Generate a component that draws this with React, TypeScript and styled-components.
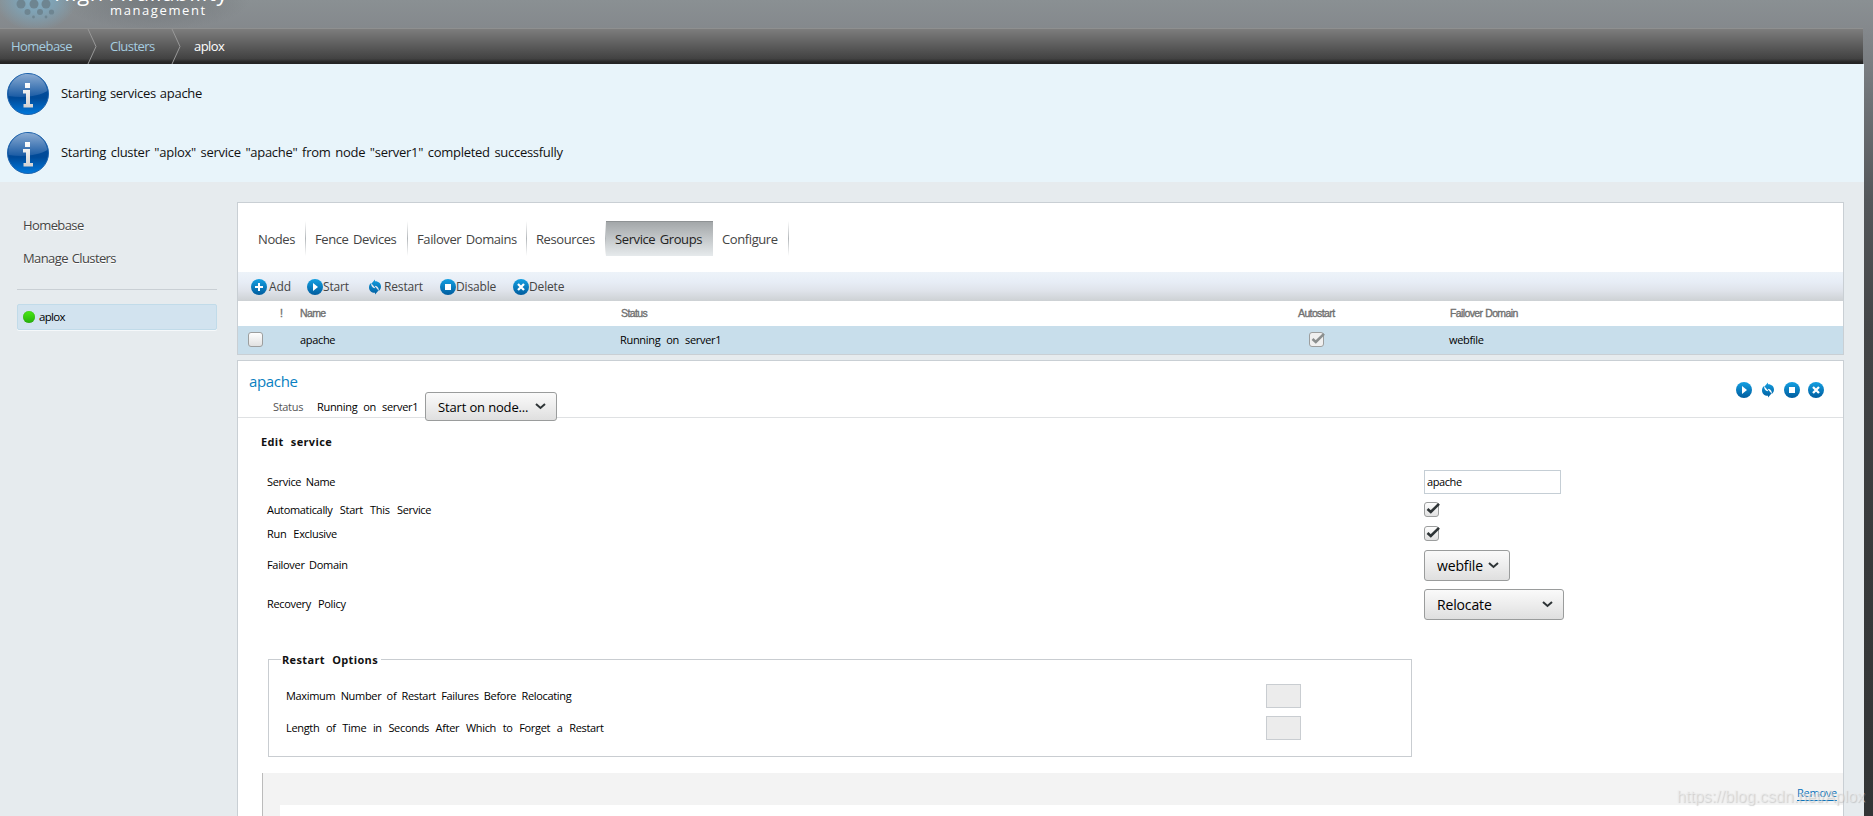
import React from 'react';
import styled, { createGlobalStyle } from 'styled-components';

const sans = `'Open Sans', 'Noto Sans', sans-serif`;

const GlobalStyle = createGlobalStyle`
  * { box-sizing: border-box; }
  body { margin: 0; overflow: hidden; font-family: ${sans}; color: #111; }
`;

const Page = styled.div`
  position: relative;
  width: 100%;
  height: 816px;
  overflow: hidden;
  display: flex;
  flex-direction: column;
  padding-right: 9px;
  background: linear-gradient(#8a9093 0, #84888c 30px, #6e7276 100px, #54575a 200px, #434547 330px, #383a3b 560px, #333536 816px);
`;

const Header = styled.header`
  height: 28px;
  flex: none;
  position: relative;
  overflow: hidden;
`;
const Glow = styled.div`
  position: absolute;
  left: -5px;
  top: -35px;
  width: 82px;
  height: 66px;
  background: radial-gradient(closest-side, #86b0c6 0, #7fa1b3 45%, rgba(130, 150, 160, 0) 100%);
`;
const Logo = styled.svg`
  position: absolute;
  left: 0;
  top: 0;
`;
const Shade = styled.div`
  position: absolute;
  left: 60px;
  top: -30px;
  width: 190px;
  height: 60px;
  background: radial-gradient(closest-side, rgba(90, 94, 98, 0.45), rgba(90, 94, 98, 0));
`;
const Brand = styled.div`
  position: absolute;
  left: 54px;
  top: -24px;
  font-weight: 500;
  font-size: 22px;
  line-height: 32px;
  letter-spacing: 0.7px;
  color: #fff;
  white-space: nowrap;
`;
const BrandSub = styled.div`
  position: absolute;
  left: 110px;
  top: 0;
  font-size: 13px;
  line-height: 20px;
  letter-spacing: 1.6px;
  color: #fff;
`;

const Breadcrumb = styled.nav`
  height: 36px;
  flex: none;
  margin-right: 1px;
  padding-left: 11px;
  display: flex;
  align-items: center;
  border-top: 1px solid #8f9090;
  background: linear-gradient(#7d7d7d, #5a5a5a 50%, #424242 85%, #272727 94%, #222);
`;
const Crumb = styled.a<{ $width: number; $current?: boolean }>`
  width: ${(p) => p.$width}px;
  font-size: 13px;
  letter-spacing: -0.55px;
  line-height: 35px;
  color: ${(p) => (p.$current ? '#fff' : '#a6cde0')};
`;
const Chevron = styled.svg`
  width: 10px;
  height: 35px;
  margin-right: 13px;
`;

const Messages = styled.section`
  flex: none;
  background: #e8f4fa;
`;
const Message = styled.div`
  height: 59px;
  display: flex;
  align-items: center;
  padding-left: 7px;
  gap: 12px;
  font-size: 13px;
  line-height: 20px;
`;
const MessageText = styled.span<{ $word: number }>`
  padding-bottom: 2px;
  letter-spacing: -0.28px;
  word-spacing: ${(p) => p.$word}px;
`;

const Body = styled.div`
  flex: 1;
  min-height: 0;
  display: flex;
  background: #e6ebee;
`;
const Sidebar = styled.aside`
  width: 237px;
  flex: none;
  padding: 27px 20px 0 17px;
`;
const SideLink = styled.a`
  display: block;
  padding-left: 6px;
  line-height: 33px;
  font-size: 13px;
  letter-spacing: -0.6px;
  word-spacing: 1px;
  color: #444;
  text-shadow: 0 1px 0 #fff;
`;
const SideRule = styled.div`
  margin: 14px 0;
  height: 1px;
  background: #c9cfd4;
`;
const SideItem = styled.a`
  height: 26px;
  display: flex;
  align-items: center;
  gap: 4px;
  padding-left: 5px;
  border: 1px solid #c1dbe9;
  border-radius: 2px;
  background: #d2e3ef;
  box-shadow: 0 1px 0 #f5f8fa;
  font-size: 11.5px;
  letter-spacing: -0.7px;
  color: #000;
`;
const SideItemLabel = styled.span`
  padding-bottom: 2px;
`;
const Dot = styled.i`
  width: 12px;
  height: 12px;
  border-radius: 50%;
  background: linear-gradient(#48ea14, #27b00c);
  box-shadow: inset 0 0 1px #2a9a10;
`;

const Main = styled.main`
  flex: 1;
  min-width: 0;
  padding: 20px 20px 0 0;
  display: flex;
  flex-direction: column;
  gap: 5px;
`;
const Panel = styled.section<{ $height: number }>`
  height: ${(p) => p.$height}px;
  flex: none;
  background: #fff;
  border: 1px solid #c9cfd4;
`;
const Tabs = styled.div`
  height: 69px;
  padding: 18px 0 0 11px;
  display: flex;
`;
const Tab = styled.a<{ $width: number; $active?: boolean }>`
  width: ${(p) => p.$width}px;
  height: 35px;
  padding-left: 9px;
  font-size: 13px;
  line-height: 34px;
  letter-spacing: -0.4px;
  word-spacing: 1.5px;
  white-space: nowrap;
  color: ${(p) => (p.$active ? '#222' : '#444')};
  background: ${(p) => (p.$active ? 'linear-gradient(#a3a7a9, #e6eaec)' : 'none')};
  border-top: ${(p) => (p.$active ? '1px solid #8e9294' : '1px solid transparent')};
`;
const TabRule = styled.i`
  width: 1px;
  height: 35px;
  background: linear-gradient(#fff, #b4b8bb 50%, #fff);
`;

const Toolbar = styled.div`
  height: 29px;
  padding-left: 13px;
  display: flex;
  align-items: center;
  background: linear-gradient(#edf3f9, #e7edf6 35%, #dfe3ea 65%, #cdd1d4);
`;
const Tool = styled.button<{ $width: number; $gap?: number }>`
  width: ${(p) => p.$width}px;
  padding: 0;
  border: 0;
  background: none;
  display: flex;
  align-items: center;
  gap: ${(p) => p.$gap ?? 0}px;
  font: 12px ${sans};
  line-height: 29px;
  letter-spacing: -0.15px;
  color: #444;
`;

const TableRow = styled.div<{ $selected?: boolean }>`
  height: ${(p) => (p.$selected ? 28 : 25)}px;
  display: grid;
  grid-template-columns: 38px 24px 320px 678px 38px 113px 1fr;
  align-items: center;
  background: ${(p) => (p.$selected ? '#c8deeb' : '#fff')};
`;
const Th = styled.span<{ $indent?: number }>`
  padding: 0 0 1px ${(p) => p.$indent ?? 0}px;
  font: 10.5px 'Liberation Sans', Arial, sans-serif;
  -webkit-text-stroke: 0.35px #707070;
  letter-spacing: -0.62px;
  word-spacing: 0.5px;
  white-space: nowrap;
  color: #707070;
`;
const CheckCell = styled.span<{ $start?: boolean }>`
  padding: 0 0 2px ${(p) => (p.$start ? 10 : 11)}px;
  line-height: 0;
`;

/* Compact 11px copy used by table cells and form labels. */
const Text = styled.span<{ $word?: number; $muted?: boolean; $width?: number }>`
  width: ${(p) => (p.$width ? `${p.$width}px` : 'auto')};
  padding-bottom: 2px;
  font-size: 11px;
  line-height: 15px;
  letter-spacing: -0.32px;
  word-spacing: ${(p) => p.$word ?? 3.5}px;
  white-space: nowrap;
  color: ${(p) => (p.$muted ? '#555' : '#000')};
`;

const DetailHead = styled.div`
  height: 57px;
  display: flex;
  justify-content: space-between;
  border-bottom: 1px solid #dfe1e3;
`;
const Title = styled.h1`
  margin: 0;
  padding: 9px 0 0 11px;
  font-size: 15px;
  font-weight: 400;
  line-height: 22px;
  letter-spacing: -0.35px;
  color: #0a7fc1;
`;
const StatusLine = styled.div`
  height: 29px;
  padding-left: 35px;
  display: flex;
  align-items: center;
`;
const StatusText = styled(Text)`
  padding-bottom: 0;
`;
const HeadActions = styled.div`
  padding: 21px 19px 0 0;
  display: flex;
  gap: 8px;
`;
const Select = styled.button<{ $width: number; $height: number; $size: number }>`
  width: ${(p) => p.$width}px;
  height: ${(p) => p.$height}px;
  padding: 0 10px 0 12px;
  display: flex;
  align-items: center;
  justify-content: space-between;
  border: 1px solid #9a9c9c;
  border-radius: 3px;
  background: linear-gradient(#fafafa, #ededed 50%, #dfdfdf);
  font: ${(p) => p.$size}px ${sans};
  letter-spacing: -0.15px;
  white-space: nowrap;
  color: #000;
`;

const Form = styled.div`
  padding-left: 29px;
`;
const Heading = styled.h2`
  margin: 0 0 16px -6px;
  padding-top: 16px;
  font-size: 11px;
  font-weight: 700;
  line-height: 16px;
  letter-spacing: 0.35px;
  word-spacing: 4px;
`;
const Field = styled.label<{ $height: number; $column: number }>`
  height: ${(p) => p.$height}px;
  display: grid;
  grid-template-columns: ${(p) => p.$column}px auto;
  align-items: center;
  justify-content: start;
`;
const Input = styled.input`
  width: 137px;
  height: 24px;
  padding: 0 0 1px 2px;
  border: 1px solid #c5ced5;
  background: #fff;
  font: 11px ${sans};
  letter-spacing: -0.4px;
  color: #000;
`;
const SmallInput = styled.input`
  width: 35px;
  height: 24px;
  border: 1px solid #c9cdd1;
  background: #ececec;
`;
const Fieldset = styled.fieldset`
  width: 1144px;
  height: 105px;
  margin: 28px 0 0 1px;
  padding: 13px 0 0 17px;
  border: 1px solid #c9cdd1;
`;
const Legend = styled.legend`
  margin-left: -5px;
  padding: 0 3px 0 1px;
  font-size: 11px;
  font-weight: 700;
  line-height: 15px;
  letter-spacing: 0.36px;
  word-spacing: 4px;
`;
const ResourceBox = styled.div`
  margin: 16px 0 0 24px;
  height: 60px;
  border-left: 1px solid #bbb;
  background: #f3f3f3;
`;
const ResourceHead = styled.div`
  height: 32px;
  padding: 12px 6px 0 0;
  display: flex;
  justify-content: flex-end;
  line-height: 15px;
  font-size: 11px;
`;
const RemoveLink = styled.a`
  height: 16px;
  letter-spacing: -0.25px;
  color: #0a72bb;
  border-bottom: 1px solid #0a72bb;
`;
const ResourceInner = styled.div`
  margin-left: 17px;
  height: 28px;
  background: #fff;
`;
const Watermark = styled.div`
  position: absolute;
  right: 8px;
  bottom: 9px;
  font: 16px/20px 'Liberation Sans', Arial, sans-serif;
  letter-spacing: 0.02px;
  white-space: nowrap;
  color: rgba(238, 238, 238, 0.6);
  text-shadow: 1px 1px 1px rgba(150, 150, 150, 0.4);
`;

function InfoIcon() {
  return (
    <svg width="42" height="42" viewBox="0 0 42 42">
      <defs>
        <linearGradient id="ball" x2="0" y2="1">
          <stop offset="0" stopColor="#0a4e9c" />
          <stop offset=".6" stopColor="#004a98" />
          <stop offset="1" stopColor="#0078dc" />
        </linearGradient>
        <linearGradient id="gloss" x2="0" y2="1">
          <stop offset="0" stopColor="#8aabd2" />
          <stop offset="1" stopColor="#1a5ba4" />
        </linearGradient>
        <linearGradient id="letter" x2="0" y2="1">
          <stop offset="0" stopColor="#fff" />
          <stop offset="1" stopColor="#d2d2d2" />
        </linearGradient>
      </defs>
      <circle cx="21" cy="21" r="20.5" fill="url(#ball)" stroke="#1c62ac" />
      <path d="M1.5 23A19.6 19.6 0 1 1 40.4 18C32 23 18 25.500 1.500 23Z" fill="url(#gloss)" />
      <path d="M18 10h5v5h-5zM16 17h7v14h3v3.500h-9.500V31H19V20.500h-3z" fill="url(#letter)" />
    </svg>
  );
}

type ActionKind = 'add' | 'play' | 'restart' | 'stop' | 'delete';

const ActionSvg = styled.svg`
  width: 16px;
  height: 16px;
  flex: none;
`;

function ActionIcon({ kind }: { kind: ActionKind }) {
  return (
    <ActionSvg viewBox="0 0 16 16">
      <defs>
        <linearGradient id="act" gradientUnits="userSpaceOnUse" x1="0" y1="0" x2="0" y2="16">
          <stop offset="0" stopColor="#14a0e2" />
          <stop offset="1" stopColor="#005c9e" />
        </linearGradient>
      </defs>
      {kind !== 'restart' && <circle cx="8" cy="8" r="8" fill="url(#act)" />}
      {kind === 'add' && <path d="M8 4v8M4 8h8" stroke="#fff" strokeWidth="2" />}
      {kind === 'play' && <path d="M6 4l5 4-5 4z" fill="#fff" />}
      {kind === 'stop' && <path d="M5 5h6v6H5z" fill="#fff" />}
      {kind === 'delete' && <path d="M5 5l6 6M11 5l-6 6" stroke="#fff" strokeWidth="2.300" />}
      {kind === 'restart' && (
        <path
          d="M8 .5V2.300C11.800 2.300 14 4.600 14 7.600C14 9.600 13.200 11 11.800 12C12.100 9.200 10.800 7 8 6.700V8.600L4.500 4.500ZM8 15.500V13.700C4.200 13.700 2 11.400 2 8.400C2 6.400 2.800 5 4.200 4C3.900 6.800 5.200 9 8 9.300V7.400L11.500 11.500Z"
          fill="url(#act)"
        />
      )}
    </ActionSvg>
  );
}

function Checkbox({ checked, disabled }: { checked?: boolean; disabled?: boolean }) {
  return (
    <svg width="17" height="17" viewBox="0 0 17 17">
      <defs>
        <linearGradient id="box" x2="0" y2="1">
          <stop offset="0" stopColor="#fff" />
          <stop offset="1" stopColor="#e0e0e0" />
        </linearGradient>
      </defs>
      <rect x=".5" y="1.500" width="14" height="14" rx="2.500" fill={disabled ? '#f0f0f0' : 'url(#box)'} stroke="#9c9e9e" />
      {checked && (
        <path d="M3.500 8l3.300 3L15 2.800" fill="none" stroke={disabled ? '#8b8f8f' : '#2e3436'} strokeWidth="2.600" />
      )}
    </svg>
  );
}

const FieldCheck = styled.span`
  padding-bottom: 2px;
  line-height: 0;
`;

function Caret() {
  return (
    <svg width="11" height="7" viewBox="0 0 11 7">
      <path d="M1 1l4.500 4L10 1" fill="none" stroke="#2e3436" strokeWidth="2" />
    </svg>
  );
}

function CrumbSeparator() {
  return (
    <Chevron viewBox="0 0 10 35">
      <path d="M1 0l8 17.500L1 35" fill="none" stroke="#999" />
    </Chevron>
  );
}

const tools: { kind: ActionKind; label: string; width: number; gap?: number }[] = [
  { kind: 'add', label: 'Add', width: 56, gap: 2 },
  { kind: 'play', label: 'Start', width: 60 },
  { kind: 'restart', label: 'Restart', width: 73, gap: 1 },
  { kind: 'stop', label: 'Disable', width: 73 },
  { kind: 'delete', label: 'Delete', width: 60 },
];

const tabs = [
  { label: 'Nodes', width: 56 },
  { label: 'Fence Devices', width: 101 },
  { label: 'Failover Domains', width: 118 },
  { label: 'Resources', width: 78 },
  { label: 'Service Groups', width: 107, active: true },
  { label: 'Configure', width: 75 },
];

export default function App() {
  return (
    <Page>
      <GlobalStyle />
      <Header>
        <Glow />
        <Shade />
        <Logo width="70" height="28" viewBox="0 0 70 28">
          <g fill="#6e8591">
            <circle cx="21" cy="4" r="4.500" />
            <circle cx="34" cy="4" r="4.500" />
            <circle cx="46" cy="4" r="4.500" />
            <circle cx="27.500" cy="12" r="3" />
            <circle cx="40" cy="12" r="3" />
            <circle cx="51.500" cy="12" r="2.600" />
            <circle cx="33.500" cy="17" r="1.400" />
            <circle cx="46" cy="17" r="1.400" />
          </g>
        </Logo>
        <Brand>High Availability</Brand>
        <BrandSub>management</BrandSub>
      </Header>
      <Breadcrumb>
        <Crumb $width={76}>Homebase</Crumb>
        <CrumbSeparator />
        <Crumb $width={61}>Clusters</Crumb>
        <CrumbSeparator />
        <Crumb $width={60} $current>aplox</Crumb>
      </Breadcrumb>
      <Messages>
        <Message>
          <InfoIcon />
          <MessageText $word={0.8}>Starting services apache</MessageText>
        </Message>
        <Message>
          <InfoIcon />
          <MessageText $word={1.6}>
            Starting cluster "aplox" service "apache" from node "server1" completed successfully
          </MessageText>
        </Message>
      </Messages>
      <Body>
        <Sidebar>
          <SideLink>Homebase</SideLink>
          <SideLink>Manage Clusters</SideLink>
          <SideRule />
          <SideItem>
            <Dot />
            <SideItemLabel>aplox</SideItemLabel>
          </SideItem>
        </Sidebar>
        <Main>
          <Panel $height={153}>
            <Tabs>
              {tabs.map((t) => (
                <React.Fragment key={t.label}>
                  <Tab $width={t.width} $active={t.active}>{t.label}</Tab>
                  {!t.active && <TabRule />}
                </React.Fragment>
              ))}
            </Tabs>
            <Toolbar>
              {tools.map((t) => (
                <Tool key={t.label} $width={t.width} $gap={t.gap}>
                  <ActionIcon kind={t.kind} />
                  {t.label}
                </Tool>
              ))}
            </Toolbar>
            <TableRow>
              <span />
              <Th $indent={4}>!</Th>
              <Th>Name</Th>
              <Th $indent={1}>Status</Th>
              <Th>Autostart</Th>
              <span />
              <Th $indent={1}>Failover Domain</Th>
            </TableRow>
            <TableRow $selected>
              <CheckCell $start><Checkbox /></CheckCell>
              <span />
              <Text>apache</Text>
              <Text>Running on server1</Text>
              <CheckCell><Checkbox checked disabled /></CheckCell>
              <span />
              <Text>webfile</Text>
            </TableRow>
          </Panel>
          <Panel $height={500}>
            <DetailHead>
              <div>
                <Title>apache</Title>
                <StatusLine>
                  <StatusText $muted $width={44}>Status</StatusText>
                  <StatusText $width={108}>Running on server1</StatusText>
                  <Select $width={132} $height={29} $size={13}>
                    Start on node...
                    <Caret />
                  </Select>
                </StatusLine>
              </div>
              <HeadActions>
                <ActionIcon kind="play" />
                <ActionIcon kind="restart" />
                <ActionIcon kind="stop" />
                <ActionIcon kind="delete" />
              </HeadActions>
            </DetailHead>
            <Form>
              <Heading>Edit service</Heading>
              <Field $height={32} $column={1157}>
                <Text $word={2}>Service Name</Text>
                <Input defaultValue="apache" />
              </Field>
              <Field $height={24} $column={1157}>
                <Text $word={4.8}>Automatically Start This Service</Text>
                <FieldCheck><Checkbox checked /></FieldCheck>
              </Field>
              <Field $height={24} $column={1157}>
                <Text $word={4.5}>Run Exclusive</Text>
                <FieldCheck><Checkbox checked /></FieldCheck>
              </Field>
              <Field $height={39} $column={1157}>
                <Text $word={2}>Failover Domain</Text>
                <Select $width={86} $height={31} $size={14}>
                  webfile
                  <Caret />
                </Select>
              </Field>
              <Field $height={39} $column={1157}>
                <Text $word={4.5}>Recovery Policy</Text>
                <Select $width={140} $height={31} $size={14}>
                  Relocate
                  <Caret />
                </Select>
              </Field>
              <Fieldset>
                <Legend>Restart Options</Legend>
                <Field $height={32} $column={980}>
                  <Text $word={2.7}>Maximum Number of Restart Failures Before Relocating</Text>
                  <SmallInput disabled />
                </Field>
                <Field $height={32} $column={980}>
                  <Text $word={4.1}>Length of Time in Seconds After Which to Forget a Restart</Text>
                  <SmallInput disabled />
                </Field>
              </Fieldset>
            </Form>
            <ResourceBox>
              <ResourceHead>
                <RemoveLink>Remove</RemoveLink>
              </ResourceHead>
              <ResourceInner />
            </ResourceBox>
          </Panel>
        </Main>
      </Body>
      <Watermark>https://blog.csdn.net/Aplox</Watermark>
    </Page>
  );
}
